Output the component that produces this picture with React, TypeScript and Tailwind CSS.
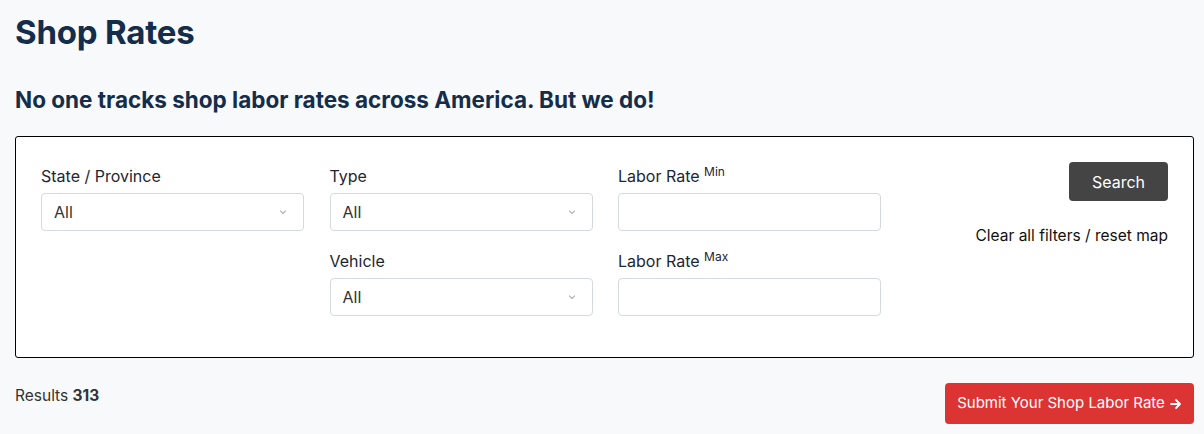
import React from "react";

const Chevron = () => (
  <svg width="10" height="10" viewBox="0 0 10 10" className="text-[#b5b9be]">
    <path d="M2.5 4 L5 6.5 L7.5 4" fill="none" stroke="currentColor" strokeWidth="1.2" strokeLinecap="round" strokeLinejoin="round" />
  </svg>
);

const Select = ({ label }: { label: string }) => (
  <div className="flex flex-col">
    <label className="text-[16px] leading-[22px] text-[#1c2636] mb-[6px]">{label}</label>
    <div className="flex items-center justify-between h-[38px] rounded-[4px] border border-[#d6d9dd] bg-white pl-[12px] pr-[15px] text-[16px] text-[#333]">
      <span>All</span>
      <Chevron />
    </div>
  </div>
);

const RateInput = ({ label, sup }: { label: string; sup: string }) => (
  <div className="flex flex-col">
    <label className="text-[16px] leading-[22px] text-[#1c2636] mb-[6px]">
      {label} <sup className="text-[12px]">{sup}</sup>
    </label>
    <div className="h-[38px] rounded-[4px] border border-[#d6d9dd] bg-white" />
  </div>
);

export default function App() {
  return (
    <div className="min-h-[434px] bg-[#f8f9fb] px-[15px] pt-[12px] font-['Inter',sans-serif]">
      <h1 className="text-[33px] leading-[40px] font-bold text-[#132d4b] tracking-[-0.2px]">Shop Rates</h1>
      <h2 className="mt-[33px] text-[22.5px] leading-[30px] font-bold text-[#132d4b]">
        No one tracks shop labor rates across America. But we do!
      </h2>

      <div className="mt-[21px] flex w-[1179px] rounded-[3px] border border-black bg-white px-[25px] pt-[25px] pb-[41px]">
        <div className="grid grid-cols-[263px_263px_263px] gap-x-[25.5px] gap-y-[19px] pt-[3px]">
          <Select label="State / Province" />
          <Select label="Type" />
          <RateInput label="Labor Rate" sup="Min" />
          <div />
          <Select label="Vehicle" />
          <RateInput label="Labor Rate" sup="Max" />
        </div>
        <div className="ml-auto flex flex-col items-end">
          <button className="h-[39px] w-[99px] rounded-[4px] bg-[#444444] text-[16px] text-white">Search</button>
          <a className="mt-[25px] text-[15.5px] leading-[20px] text-[#111]">Clear all filters / reset map</a>
        </div>
      </div>

      <div className="mt-[25px] flex w-[1179px] items-center justify-between">
        <p className="text-[15.5px] text-[#333] -mt-[15px]">
          Results <b className="font-bold">313</b>
        </p>
        <button className="flex h-[41px] w-[249px] items-center justify-center gap-[5px] rounded-[4px] bg-[#dc3333] text-[15px] text-white">
          Submit Your Shop Labor Rate
          <svg width="12" height="12" viewBox="0 0 12 12">
            <path d="M1 6 H10 M6 2 L10 6 L6 10" fill="none" stroke="currentColor" strokeWidth="1.8" strokeLinecap="round" strokeLinejoin="round" />
          </svg>
        </button>
      </div>
    </div>
  );
}
